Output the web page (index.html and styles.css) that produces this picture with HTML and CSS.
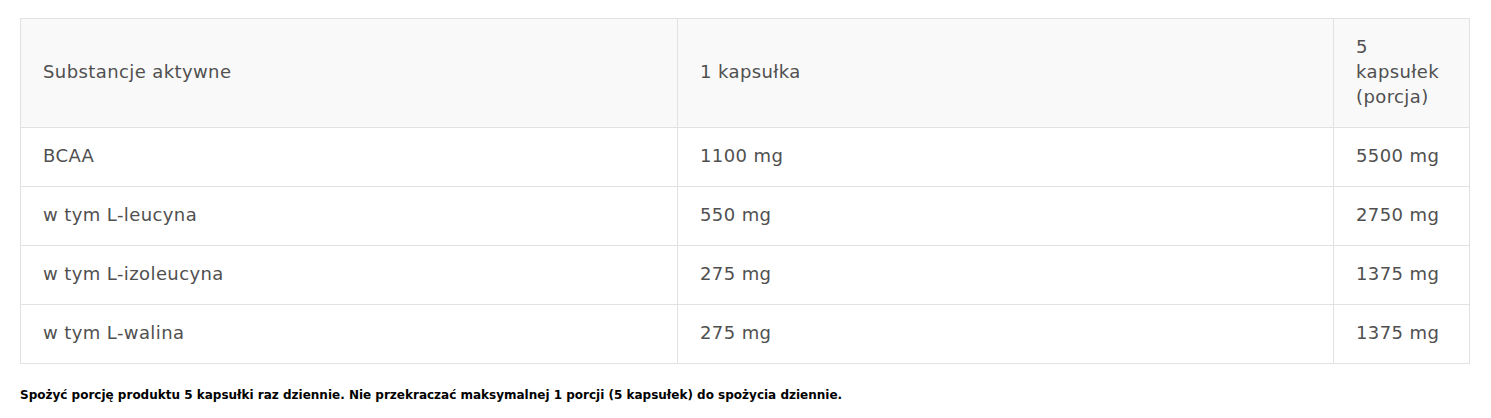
FILE: index.html
```html
<!DOCTYPE html>
<html lang="pl">
<head>
<meta charset="utf-8">
<link rel="stylesheet" href="styles.css">
</head>
<body>
<div class="wrap">
  <table class="facts">
    <colgroup>
      <col class="c1"><col class="c2"><col class="c3">
    </colgroup>
    <thead>
      <tr><th>Substancje aktywne</th><th>1 kapsułka</th><th>5 kapsułek (porcja)</th></tr>
    </thead>
    <tbody>
      <tr><td>BCAA</td><td>1100 mg</td><td>5500 mg</td></tr>
      <tr><td>w tym L-leucyna</td><td>550 mg</td><td>2750 mg</td></tr>
      <tr><td>w tym L-izoleucyna</td><td>275 mg</td><td>1375 mg</td></tr>
      <tr><td>w tym L-walina</td><td>275 mg</td><td>1375 mg</td></tr>
    </tbody>
  </table>
  <p class="note">Spożyć porcję produktu 5 kapsułki raz dziennie. Nie przekraczać maksymalnej 1 porcji (5 kapsułek) do spożycia dziennie.</p>
</div>
</body>
</html>
```
FILE: styles.css
```css
html, body { margin: 0; padding: 0; background: #fff; }
.wrap { padding: 18px 22px 0 20px; font-family: "DejaVu Sans", "Open Sans", sans-serif; }
.facts {
  border-collapse: collapse;
  table-layout: fixed;
  width: 1449px;
  color: #505050;
  font-size: 18px;
  line-height: 25px;
  letter-spacing: 0.4px;
}
.c1 { width: 657px; }
.c2 { width: 656px; }
.c3 { width: 136px; }
.facts th, .facts td {
  border: 1px solid #e2e2e2;
  padding: 15px 22px 18px 22px;
  text-align: left;
  font-weight: 400;
  vertical-align: middle;
}
.facts thead th { background: #f9f9f9; }
.note {
  margin: 22px 0 0 0;
  font-size: 12px;
  font-weight: 700;
  color: #000;
  line-height: 18px;
}
```
